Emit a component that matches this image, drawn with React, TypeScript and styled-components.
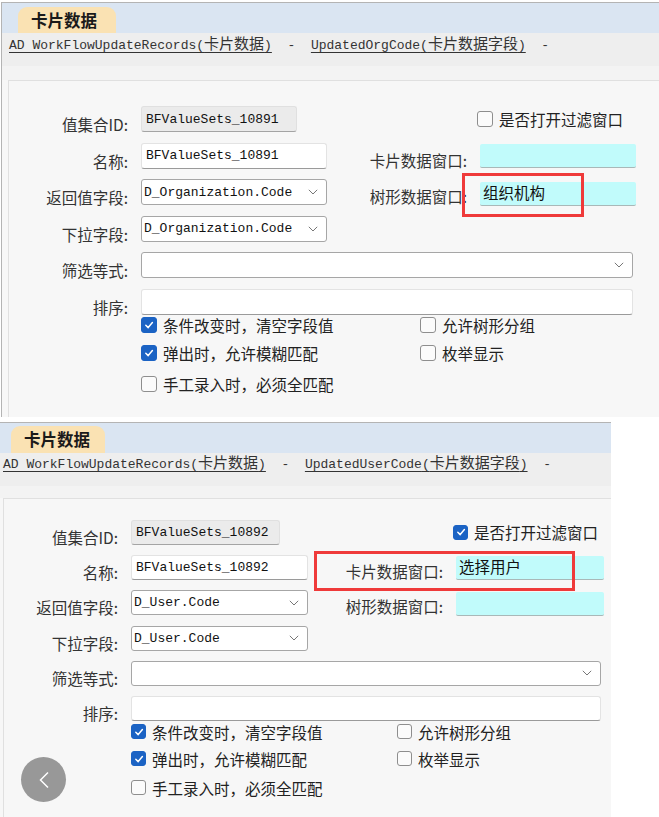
import React from 'react'
import styled, { createGlobalStyle } from 'styled-components'

const MONO = `"Liberation Mono", "Noto Sans CJK SC", monospace`
const SANS = `"Noto Sans CJK SC", "Noto Sans", sans-serif`

const GlobalStyle = createGlobalStyle`
  html, body {
    margin: 0;
    padding: 0;
    background: #fff;
  }
  body {
    width: 659px;
    height: 817px;
    overflow: hidden;
    font-family: ${SANS};
    color: #222;
  }
`

type Geo = {
  x: number
  top: number
  width: number
  leftBorder: boolean
  tabLeft: number
  tabWidth: number
  tabHeight: number
  linkLeft: number
  linkPad: number
  band: number
  innerLeft: number
  padTop: number
  cols: number[]
  idWidth: number
  rowH: number
  rowGap: number
  checksTop: number
  checksCol: number
  checksGap: number
  lastGap: number
  padBottom: number
  box: number
}

const Page = styled.div`
  position: relative;
  width: 659px;
  height: 817px;
  overflow: hidden;
`

const Panel = styled.div<{ $g: Geo }>`
  position: relative;
  margin: ${({ $g }) => $g.top}px 0 0 ${({ $g }) => $g.x}px;
  width: ${({ $g }) => $g.width}px;
  border-top: 1px solid #b4b4b4;
  border-left: ${({ $g }) => ($g.leftBorder ? '1px solid #b4b4b4' : 'none')};
  background: #f7f7f7;
`

const TabStrip = styled.div`
  height: 30px;
  background: #dae5f2;
  display: flex;
  align-items: flex-end;
`

const Tab = styled.div<{ $g: Geo }>`
  margin-left: ${({ $g }) => $g.tabLeft}px;
  width: ${({ $g }) => $g.tabWidth}px;
  height: ${({ $g }) => $g.tabHeight}px;
  box-sizing: border-box;
  padding-left: 13px;
  background: #fae2b3;
  border-radius: 9px 9px 0 0;
  font-family: ${SANS};
  font-weight: 700;
  font-size: 16.5px;
  line-height: ${({ $g }) => $g.tabHeight}px;
  color: #1a1a1a;
`

const LinkBar = styled.div<{ $g: Geo }>`
  height: 33px;
  box-sizing: border-box;
  padding: ${({ $g }) => $g.linkPad}px 0 0 ${({ $g }) => $g.linkLeft}px;
  background: #eeeeee;
  font-family: ${MONO};
  font-size: 13px;
  line-height: 18px;
  color: #333;
  white-space: pre;
`

const Link = styled.span`
  text-decoration: underline;
  text-underline-offset: 3px;
`

const Cjk = styled.span`
  font-family: ${SANS};
  font-size: 15px;
`

const Band = styled.div<{ $g: Geo }>`
  height: ${({ $g }) => $g.band}px;
  background: #f3f3f3;
`

const Inner = styled.div<{ $g: Geo }>`
  margin-left: ${({ $g }) => $g.innerLeft}px;
  padding: ${({ $g }) => $g.padTop}px 0 ${({ $g }) => $g.padBottom}px;
  border-top: 1px solid #e0e0e0;
  border-left: 1px solid #e0e0e0;
  background: #f7f7f7;
`

const Form = styled.div<{ $g: Geo }>`
  display: grid;
  grid-template-columns: ${({ $g }) => $g.cols.map(c => `${c}px`).join(' ')};
  grid-auto-rows: ${({ $g }) => $g.rowH}px;
  row-gap: ${({ $g }) => $g.rowGap}px;
`

const Label = styled.div`
  grid-column: 1;
  align-self: end;
  padding: 0 13px 0 0;
  text-align: right;
  font-size: 15.5px;
  line-height: 16px;
  color: #333;
  white-space: nowrap;
`

const RightLabel = styled(Label)`
  grid-column: 3;
  padding-bottom: 1px;
`

const Field = styled.div<{ $wide?: boolean; $w?: number }>`
  grid-column: ${({ $wide }) => ($wide ? '2 / 5' : 'auto')};
  box-sizing: border-box;
  width: ${({ $wide, $w }) => ($w ? `${$w}px` : $wide ? 'calc(100% - 3px)' : '100%')};
  height: 100%;
  display: flex;
  align-items: center;
  padding: 0 8px 0 4px;
  font-family: ${MONO};
  font-size: 13px;
  color: #111;
  white-space: pre;
`

const TextBox = styled(Field)`
  background: #fff;
  border: 1px solid #e3e3e3;
  border-bottom: 1px solid #9a9a9a;
  border-radius: 3px;
`

const ReadOnly = styled(Field)`
  background: #ebebeb;
  border: 1px solid #e0e0e0;
  border-bottom: 1px solid #a4a4a4;
  border-radius: 3px;
`

const Select = styled(Field)`
  background: #fff;
  border: 1px solid #a6a6a6;
  border-radius: 3px;
  padding-left: 2px;
`

const Arrow = styled.svg`
  margin-left: auto;
  flex: none;
`

const Cyan = styled.div<{ $shift: number }>`
  grid-column: 4;
  align-self: center;
  box-sizing: border-box;
  height: 24px;
  margin-top: ${({ $shift }) => $shift}px;
  padding: 0 3px;
  background: #c1fbfb;
  border-bottom: 1px solid #a9b8b8;
  border-radius: 2px;
  font-size: 15.5px;
  line-height: 20px;
  color: #111;
`

const FilterCheck = styled.label`
  grid-column: 4;
  align-self: center;
  margin-left: -3px;
  display: flex;
  align-items: center;
  gap: 6px;
  font-size: 15.5px;
  color: #222;
  white-space: nowrap;
`

const Checks = styled.div<{ $g: Geo }>`
  display: grid;
  grid-template-columns: ${({ $g }) => $g.checksCol}px 1fr;
  grid-auto-rows: 20px;
  row-gap: ${({ $g }) => $g.checksGap}px;
  margin-top: ${({ $g }) => $g.checksTop}px;
  padding-left: ${({ $g }) => $g.cols[0]}px;
`

const CheckRow = styled.label<{ $extra?: number }>`
  display: flex;
  align-items: center;
  gap: 6px;
  margin-top: ${({ $extra }) => $extra || 0}px;
  font-size: 15.5px;
  color: #222;
  white-space: nowrap;
`

const BoxFrame = styled.span<{ $on: boolean; $size: number }>`
  flex: none;
  box-sizing: border-box;
  width: ${({ $size }) => $size}px;
  height: ${({ $size }) => $size}px;
  border-radius: 3px;
  border: 1px solid ${({ $on }) => ($on ? '#1b63c4' : '#8e8e8e')};
  background: ${({ $on }) => ($on ? '#1b63c4' : '#fbfbfb')};
  display: flex;
  align-items: center;
  justify-content: center;
`

const Mark = styled.div<{ $x: number; $y: number; $w: number; $h: number }>`
  position: absolute;
  left: ${({ $x }) => $x}px;
  top: ${({ $y }) => $y}px;
  width: ${({ $w }) => $w}px;
  height: ${({ $h }) => $h}px;
  box-sizing: border-box;
  border: 3px solid #ef3a3a;
  pointer-events: none;
`

const BackButton = styled.div`
  position: absolute;
  left: 21px;
  top: 757px;
  width: 45px;
  height: 45px;
  border-radius: 50%;
  background: rgba(135, 135, 135, 0.85);
  display: flex;
  align-items: center;
  justify-content: center;
`

function Box({ on, size }: { on: boolean, size: number }) {
  return (
    <BoxFrame $on={on} $size={size}>
      {on && (
        <svg width="10" height="10" viewBox="0 0 10 10">
          <polyline points="1.8,5.2 4.2,7.6 8.4,2.6" fill="none" stroke="#fff" strokeWidth="1.5" strokeLinecap="round" strokeLinejoin="round" />
        </svg>
      )}
    </BoxFrame>
  )
}

function Chevron() {
  return (
    <Arrow width="10" height="6" viewBox="0 0 10 6">
      <polyline points="0.8,0.8 5,5 9.2,0.8" fill="none" stroke="#777" strokeWidth="1" />
    </Arrow>
  )
}

type Card = {
  g: Geo
  id: string
  field: string
  code: string
  filterOn: boolean
  cardWin: string
  treeWin: string
  mark: { x: number, y: number, w: number, h: number }
}

function CardPanel({ g, id, field, code, filterOn, cardWin, treeWin, mark }: Card) {
  return (
    <Panel $g={g}>
      <TabStrip>
        <Tab $g={g}>卡片数据</Tab>
      </TabStrip>
      <LinkBar $g={g}>
        <Link>AD WorkFlowUpdateRecords(<Cjk>卡片数据</Cjk>)</Link>
        {'  -  '}
        <Link>{field}(<Cjk>卡片数据字段</Cjk>)</Link>
        {'  -'}
      </LinkBar>
      <Band $g={g} />
      <Inner $g={g}>
        <Form $g={g}>
          <Label>值集合ID:</Label>
          <ReadOnly $w={g.idWidth}>{id}</ReadOnly>
          <FilterCheck><Box on={filterOn} size={g.box} />是否打开过滤窗口</FilterCheck>

          <Label>名称:</Label>
          <TextBox>{id}</TextBox>
          <RightLabel>卡片数据窗口:</RightLabel>
          <Cyan $shift={0}>{cardWin}</Cyan>

          <Label>返回值字段:</Label>
          <Select>{code}<Chevron /></Select>
          <RightLabel>树形数据窗口:</RightLabel>
          <Cyan $shift={3}>{treeWin}</Cyan>

          <Label>下拉字段:</Label>
          <Select>{code}<Chevron /></Select>

          <Label>筛选等式:</Label>
          <Select $wide><Chevron /></Select>

          <Label>排序:</Label>
          <TextBox $wide />
        </Form>
        <Checks $g={g}>
          <CheckRow><Box on size={g.box} />条件改变时，清空字段值</CheckRow>
          <CheckRow><Box on={false} size={g.box} />允许树形分组</CheckRow>
          <CheckRow><Box on size={g.box} />弹出时，允许模糊匹配</CheckRow>
          <CheckRow><Box on={false} size={g.box} />枚举显示</CheckRow>
          <CheckRow $extra={g.lastGap}><Box on={false} size={g.box} />手工录入时，必须全匹配</CheckRow>
        </Checks>
      </Inner>
      <Mark $x={mark.x} $y={mark.y} $w={mark.w} $h={mark.h} />
    </Panel>
  )
}

const upper: Geo = {
  x: 1, top: 2, width: 658, leftBorder: true,
  tabLeft: 16, tabWidth: 98, tabHeight: 26,
  linkLeft: 7, linkPad: 1, band: 14,
  innerLeft: 6, padTop: 25,
  cols: [132, 186, 153, 156], idWidth: 156,
  rowH: 26, rowGap: 10.6,
  checksTop: 0, checksCol: 279, checksGap: 8, lastGap: 6,
  padBottom: 26, box: 16,
}

const lower: Geo = {
  x: 0, top: 5, width: 611, leftBorder: false,
  tabLeft: 11, tabWidth: 94, tabHeight: 27,
  linkLeft: 3, linkPad: 0, band: 12,
  innerLeft: 3, padTop: 21,
  cols: [127, 177, 148, 148], idWidth: 149,
  rowH: 25, rowGap: 10.2,
  checksTop: 1, checksCol: 266, checksGap: 7, lastGap: 4,
  padBottom: 30, box: 15,
}

export default function App() {
  return (
    <Page>
      <GlobalStyle />
      <CardPanel
        g={upper}
        id="BFValueSets_10891"
        field="UpdatedOrgCode"
        code="D_Organization.Code"
        filterOn={false}
        cardWin=""
        treeWin="组织机构"
        mark={{ x: 460, y: 170, w: 122, h: 44 }}
      />
      <CardPanel
        g={lower}
        id="BFValueSets_10892"
        field="UpdatedUserCode"
        code="D_User.Code"
        filterOn
        cardWin="选择用户"
        treeWin=""
        mark={{ x: 314, y: 128, w: 261, h: 40 }}
      />
      <BackButton>
        <svg width="12" height="18" viewBox="0 0 12 18">
          <polyline points="10,1.5 2.5,9 10,16.5" fill="none" stroke="#fff" strokeWidth="1.5" />
        </svg>
      </BackButton>
    </Page>
  )
}
